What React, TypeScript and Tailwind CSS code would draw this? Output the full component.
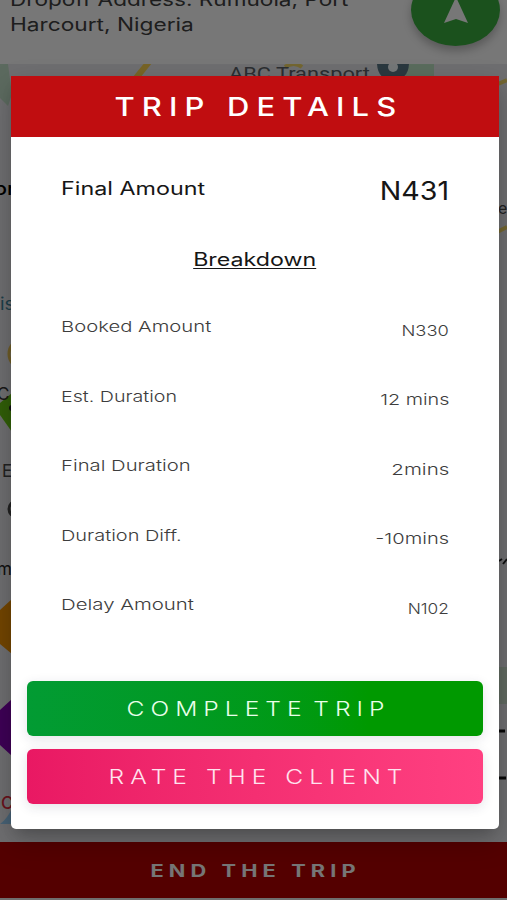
const rows = [
  { label: 'Booked Amount', value: 'N330', labelClass: 'scale-x-[1.35]', valueClass: 'scale-x-[1.22]' },
  { label: 'Est. Duration', value: '12 mins', labelClass: 'scale-x-[1.31]', valueClass: 'scale-x-[1.32]' },
  { label: 'Final Duration', value: '2mins', labelClass: 'scale-x-[1.35]', valueClass: 'scale-x-[1.37]' },
  { label: 'Duration Diff.', value: '-10mins', labelClass: 'scale-x-[1.33]', valueClass: 'scale-x-[1.34]' },
  { label: 'Delay Amount', value: 'N102', labelClass: 'scale-x-[1.36]', valueClass: 'scale-x-[1.15]' },
]

function MapBackground() {
  return (
    <div className="relative h-[778px] overflow-hidden bg-[#dcdde0]">
      <svg className="absolute inset-0" width="507" height="778" viewBox="0 0 507 778">
        <path d="M0 0H8L12 30L8 42L0 34Z" fill="#b9d4be" />
        <path d="M409 0H434V18H403Z" fill="#b5d8ba" />
        <path d="M136 14L149 -2" stroke="#efc94c" strokeWidth="6" />
        <path d="M285 3Q294 -3 302 3M498 20L507 16M497 168L507 163" stroke="#e6cd62" strokeWidth="4" fill="none" />
        <path d="M377 0H409Q408 16 393 16Q378 16 377 0Z" fill="#55717f" />
        <circle cx="393" cy="3" r="5" fill="#e8eef0" />
        <circle cx="24" cy="290" r="15" fill="none" stroke="#dcb84e" strokeWidth="3" />
        <path d="M0 339L12 329V368L0 351Z" fill="#63bd12" />
        <circle cx="12" cy="344" r="3" fill="#222" />
        <circle cx="17" cy="445" r="8" fill="none" stroke="#444" strokeWidth="3" />
        <path d="M0 546L12 535V590L0 580Z" fill="#e58a00" />
        <path d="M0 646L12 635V692L0 681Z" fill="#7d00ac" />
        <path d="M0 760Q8 754 12 744V760Z" fill="#8fc3e8" />
        <path d="M499 497L502 495M503 500L507 495" stroke="#222" strokeWidth="2" />
        <path d="M499 603H507V640H499Z" fill="#c3d4c3" />
        <path d="M499 667H505M499 714H506" stroke="#111" strokeWidth="3" />
      </svg>
      <span className="absolute left-[229px] top-0 origin-left scale-x-[1.21] whitespace-nowrap font-['Roboto',sans-serif] text-[18px] leading-5 text-[#565a62]">
        ABC Transport
      </span>
      <span className="absolute left-[-6px] top-[115px] origin-left scale-x-[1.2] text-[18px] font-medium leading-5 text-black">or</span>
      <span className="absolute left-0 top-[230px] origin-left scale-x-[1.1] text-[17px] leading-5 text-[#397b92]">is</span>
      <span className="absolute left-[-3px] top-[320px] text-[17px] leading-5 text-[#333]">C</span>
      <span className="absolute left-[2px] top-[397px] text-[17px] leading-5 text-[#444]">E</span>
      <span className="absolute left-[-3px] top-[495px] text-[17px] leading-5 text-[#222]">m</span>
      <span className="absolute left-[1px] top-[729px] text-[17px] font-medium leading-5 text-[#d2283a]">C</span>
      <span className="absolute left-[498px] top-[134px] text-[16px] leading-5 text-[#444]">e</span>
    </div>
  )
}

function TripScreen() {
  return (
    <div className="flex h-full flex-col bg-[#dedede]">
      <header className="relative h-[64px] shrink-0 bg-[#eeeeee]">
        <p className="whitespace-nowrap pl-[10px] text-[18px] leading-[25px] text-[#3c3c3c]">
          <span className="-mt-[13px] block origin-left scale-x-[1.255]">Dropoff Address: Rumuola, Port</span>
          <span className="block origin-left scale-x-[1.26]">Harcourt, Nigeria</span>
        </p>
        <div className="absolute right-[7px] top-[-26px] z-10 flex h-[72px] w-[89px] items-center justify-center rounded-[50%] bg-[#36a33b] shadow-[0_5px_8px_rgba(0,0,0,0.25)]">
          <svg width="24" height="28" viewBox="0 0 24 28" className="mt-[2px]">
            <path d="M12 0L24 26L12 22L0 26Z" fill="#eee" />
          </svg>
        </div>
      </header>
      <MapBackground />
      <div className="flex h-[56px] shrink-0 items-center justify-center bg-[#a80000]">
        <span className="scale-x-[1.28] whitespace-nowrap pl-[3px] pt-[4px] text-[17px] font-bold tracking-[4px] text-[#ececec]">END THE TRIP</span>
      </div>
    </div>
  )
}

export default function App() {
  return (
    <div className="relative h-[900px] w-[507px] overflow-hidden font-['Inter',sans-serif]">
      <TripScreen />
      <div className="absolute inset-0 z-20 bg-black/50 px-[11px] pt-[76px]">
        <div className="flex h-[753px] w-[488px] flex-col overflow-hidden rounded-b-[5px] bg-white shadow-[0_8px_14px_-6px_rgba(0,0,0,0.2),0_12px_30px_0px_rgba(0,0,0,0.2)]">
          <h1 className="flex h-[61px] shrink-0 items-center justify-center bg-[#c00d10] text-[26px] font-medium text-white">
            <span className="scale-x-[1.19] whitespace-nowrap pl-[6px] tracking-[6px]">TRIP DETAILS</span>
          </h1>

          <div className="flex flex-col px-[50px]">
            <div className="mt-[36px] flex h-[32px] items-start justify-between text-[#161616]">
              <span className="origin-left scale-x-[1.295] whitespace-nowrap text-[18px] leading-[32px]">Final Amount</span>
              <span className="origin-right scale-x-[1.1] whitespace-nowrap text-[26px] leading-[36px]">N431</span>
            </div>
            <div className="mt-[39px] flex h-[30px] items-center justify-center">
              <span className="scale-x-[1.29] whitespace-nowrap text-[18px] text-[#161616] underline underline-offset-2">Breakdown</span>
            </div>
            <div className="mt-[38px] flex flex-col">
              {rows.map((row) => (
                <div key={row.label} className="flex h-[69.5px] items-start justify-between text-[15px] leading-[30px] text-[#3d3d3d]">
                  <span className={`origin-left whitespace-nowrap font-light ${row.labelClass}`}>{row.label}</span>
                  <span className={`mt-[3.5px] origin-right whitespace-nowrap font-light ${row.valueClass}`}>{row.value}</span>
                </div>
              ))}
            </div>
          </div>

          <div className="mt-auto flex flex-col gap-[13px] px-4 pb-[25px]">
            <button className="flex h-[55px] items-center justify-center rounded-[6px] bg-linear-to-r from-[#029b33] to-[#009900] to-75% shadow-[0_3px_12px_rgba(40,40,80,0.13)]">
              <span className="scale-x-[1.2] whitespace-nowrap pl-[6px] pt-[2px] text-[20.5px] font-light tracking-[5px] [word-spacing:-6px] text-[#eaffea]">COMPLETE TRIP</span>
            </button>
            <button className="flex h-[55px] items-center justify-center rounded-[6px] bg-linear-to-r from-[#e91863] to-[#ff4081] shadow-[0_3px_12px_rgba(40,40,80,0.13)]">
              <span className="scale-x-[1.2] whitespace-nowrap pl-[6px] pt-[2px] text-[20.5px] font-light tracking-[5px] text-[#ffe3ee]">RATE THE CLIENT</span>
            </button>
          </div>
        </div>
      </div>
    </div>
  )
}
